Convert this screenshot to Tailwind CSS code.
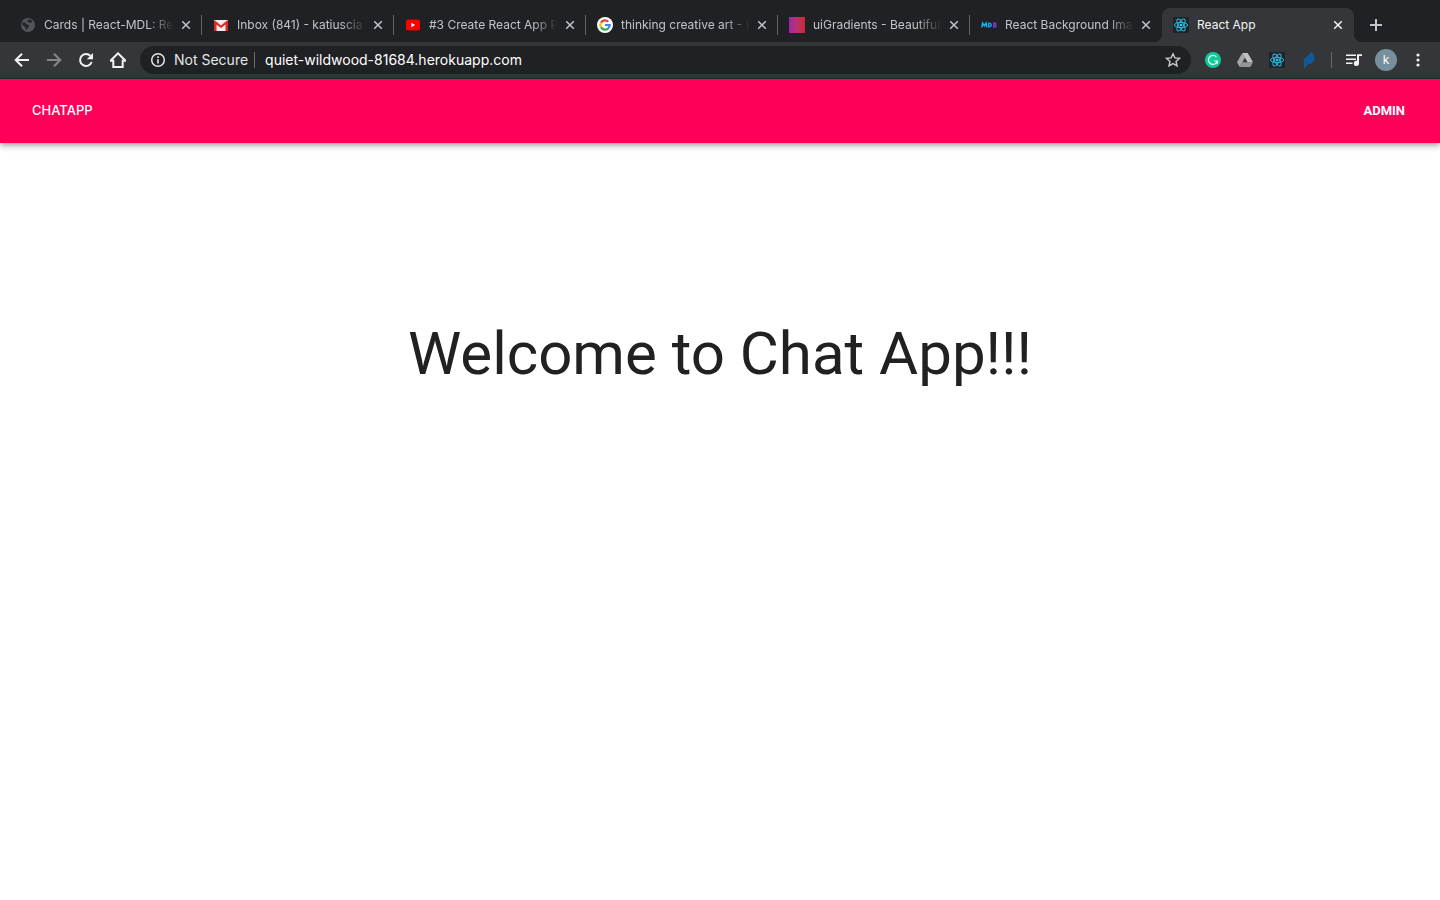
<!DOCTYPE html>
<html lang="en">
<head>
<meta charset="utf-8">
<meta name="viewport" content="width=device-width, initial-scale=1">
<title>React App</title>
<script src="https://cdn.jsdelivr.net/npm/@tailwindcss/browser@4"></script>
</head>
<body class="bg-white font-['Inter',sans-serif]">
<svg class="hidden" aria-hidden="true">
  <symbol id="close" viewBox="0 0 16 16"><path d="M4.200 4.200l7.600 7.600M11.800 4.200l-7.600 7.600" fill="none" stroke="currentColor" stroke-width="1.500"/></symbol>
  <symbol id="react" viewBox="0 0 16 16">
    <rect width="16" height="16" rx="1" fill="#20232a"/>
    <g fill="none" stroke="#2bb9dd" stroke-width="1">
      <ellipse cx="8" cy="8" rx="6.600" ry="2.600"/>
      <ellipse cx="8" cy="8" rx="6.600" ry="2.600" transform="rotate(60 8 8)"/>
      <ellipse cx="8" cy="8" rx="6.600" ry="2.600" transform="rotate(120 8 8)"/>
    </g>
    <circle cx="8" cy="8" r="1.300" fill="#2bd3f7"/>
  </symbol>
</svg>

<!-- Browser chrome -->
<div class="bg-[#202124]">
  <nav aria-label="Tabs" class="flex items-end pt-2 pl-[10px]">
    <div class="relative flex h-[34px] min-w-0 max-w-48 flex-1 items-center pr-2 pl-[10px]">
      <svg class="mr-2 size-4 shrink-0" viewBox="0 0 16 16"><circle cx="8" cy="8" r="7" fill="#54555b"/><path d="M2.500 5.500C4 5 5.500 5.800 6.500 7c.8.9 2 .5 2.500 1.500.5 1.200-.8 1.500-1.200 2.500-.3.900-1 2-1.600 1.600C5.400 12 5.800 10.500 5 9.800 4 9 2.500 8.500 2.300 7.500zM8.500 2.300c1.500 0 3.300.8 4.200 2.200-1 .3-1.200 1.300-2.200 1.400-1 .1-1.200-.9-2.200-1-.8-.1-1.200-.6-.9-1.300z" fill="#25262a"/></svg>
      <a href="#" class="min-w-0 flex-1 overflow-hidden text-xs whitespace-nowrap text-[#c1c4c9] [mask-image:linear-gradient(to_right,black_80%,transparent)]">Cards | React-MDL: Rea</a>
      <button aria-label="Close tab" class="ml-1 size-4 shrink-0 text-[#c1c4c9]"><svg class="size-4"><use href="#close"/></svg></button>
      <span class="absolute top-[7px] right-0 h-5 w-px bg-[#5f6064]"></span>
    </div>
    <div class="relative flex h-[34px] min-w-0 max-w-48 flex-1 items-center pr-2 pl-[11px]">
      <svg class="mr-2 size-4 shrink-0" viewBox="0 0 16 16"><path d="M1 3h14v11H1z" fill="#eee"/><path d="M1 14V3.500h1L8 8.500l6-5h1V14h-2.500V7.500L8 11 3.500 7.500V14z" fill="#e0281f"/></svg>
      <a href="#" class="min-w-0 flex-1 overflow-hidden text-xs whitespace-nowrap text-[#c1c4c9] [mask-image:linear-gradient(to_right,black_80%,transparent)]">Inbox (841) - katiuscia</a>
      <button aria-label="Close tab" class="ml-1 size-4 shrink-0 text-[#c1c4c9]"><svg class="size-4"><use href="#close"/></svg></button>
      <span class="absolute top-[7px] right-0 h-5 w-px bg-[#5f6064]"></span>
    </div>
    <div class="relative flex h-[34px] min-w-0 max-w-48 flex-1 items-center pr-2 pl-[11px]">
      <svg class="mr-2 size-4 shrink-0" viewBox="0 0 16 16"><rect x="1" y="2.500" width="14" height="11" rx="2.500" fill="#f00"/><path d="M6.300 5.800v4.400L10.200 8z" fill="#fff"/></svg>
      <a href="#" class="min-w-0 flex-1 overflow-hidden text-xs whitespace-nowrap text-[#c1c4c9] [mask-image:linear-gradient(to_right,black_80%,transparent)]">#3 Create React App P</a>
      <button aria-label="Close tab" class="ml-1 size-4 shrink-0 text-[#c1c4c9]"><svg class="size-4"><use href="#close"/></svg></button>
      <span class="absolute top-[7px] right-0 h-5 w-px bg-[#5f6064]"></span>
    </div>
    <div class="relative flex h-[34px] min-w-0 max-w-48 flex-1 items-center pr-2 pl-[11px]">
      <svg class="mr-2 size-4 shrink-0" viewBox="0 0 16 16"><circle cx="8" cy="8" r="8" fill="#fff"/><g fill="none" stroke-width="2.200"><path d="M4 5.600A4.700 4.700 0 0 1 11.300 4.700" stroke="#ea4335"/><path d="M4 5.600a4.700 4.700 0 0 0 0 4.800" stroke="#fbbc05"/><path d="M4 10.400a4.700 4.700 0 0 0 7 1.200" stroke="#34a853"/><path d="M8 8h4.700a4.700 4.700 0 0 1-1.700 3.600" stroke="#4285f4"/></g></svg>
      <a href="#" class="min-w-0 flex-1 overflow-hidden text-xs whitespace-nowrap text-[#c1c4c9] [mask-image:linear-gradient(to_right,black_80%,transparent)]">thinking creative art - R</a>
      <button aria-label="Close tab" class="ml-1 size-4 shrink-0 text-[#c1c4c9]"><svg class="size-4"><use href="#close"/></svg></button>
      <span class="absolute top-[7px] right-0 h-5 w-px bg-[#5f6064]"></span>
    </div>
    <div class="relative flex h-[34px] min-w-0 max-w-48 flex-1 items-center pr-2 pl-[11px]">
      <span class="mr-2 size-4 shrink-0 bg-linear-to-r from-[#a024a8] to-[#d42323]"></span>
      <a href="#" class="min-w-0 flex-1 overflow-hidden text-xs whitespace-nowrap text-[#c1c4c9] [mask-image:linear-gradient(to_right,black_80%,transparent)]">uiGradients - Beautiful</a>
      <button aria-label="Close tab" class="ml-1 size-4 shrink-0 text-[#c1c4c9]"><svg class="size-4"><use href="#close"/></svg></button>
      <span class="absolute top-[7px] right-0 h-5 w-px bg-[#5f6064]"></span>
    </div>
    <div class="relative flex h-[34px] min-w-0 max-w-48 flex-1 items-center pr-2 pl-[11px]">
      <svg class="mr-2 size-4 shrink-0" viewBox="0 0 16 16" fill="none" stroke-width="1.500"><path d="M.8 10.300l.8-4.300 1.700 2.800L5 6l.8 4.300" stroke="#14b4ea"/><path d="M7.700 6.200v3.500h.8a1.700 1.700 0 0 0 0-3.500z" stroke="#1c9fe8"/><path d="M12.800 6v4h1.400a1.100 1.100 0 0 0 0-2.100h-1.400 1.200a.9.900 0 0 0 0-1.900z" stroke="#7038c8"/></svg>
      <a href="#" class="min-w-0 flex-1 overflow-hidden text-xs whitespace-nowrap text-[#c1c4c9] [mask-image:linear-gradient(to_right,black_80%,transparent)]">React Background Ima</a>
      <button aria-label="Close tab" class="ml-1 size-4 shrink-0 text-[#c1c4c9]"><svg class="size-4"><use href="#close"/></svg></button>
    </div>
    <div class="relative flex h-[34px] min-w-0 max-w-48 flex-1 items-center rounded-t-lg bg-[#35363a] pr-2 pl-[11px]">
      <span class="absolute bottom-0 -left-2 size-2 bg-[radial-gradient(circle_at_0_0,transparent_8px,#35363a_8px)]"></span>
      <span class="absolute -right-2 bottom-0 size-2 bg-[radial-gradient(circle_at_100%_0,transparent_8px,#35363a_8px)]"></span>
      <svg class="mr-2 size-4 shrink-0"><use href="#react"/></svg>
      <a href="#" aria-current="page" class="min-w-0 flex-1 overflow-hidden text-xs whitespace-nowrap text-[#f4f5f6]">React App</a>
      <button aria-label="Close tab" class="ml-1 size-4 shrink-0 text-[#f1f3f4]"><svg class="size-4"><use href="#close"/></svg></button>
    </div>
    <button aria-label="New tab" class="mb-[9px] ml-[14px] size-4 shrink-0 text-[#c1c4c9]"><svg class="size-4" viewBox="0 0 16 16"><path d="M8 2v12M2 8h12" fill="none" stroke="currentColor" stroke-width="2"/></svg></button>
  </nav>

  <div class="flex h-[37px] items-center border-b border-[#28292c] bg-[#35363a] px-[14px]">
    <div class="flex shrink-0 gap-4 text-[#f1f3f4]">
      <button aria-label="Back"><svg class="size-4" viewBox="0 0 16 16" fill="none" stroke="currentColor" stroke-width="2"><path d="M15 8H2.500M8 1.700L1.700 8 8 14.300"/></svg></button>
      <button aria-label="Forward" class="text-[#85868a]"><svg class="size-4" viewBox="0 0 16 16" fill="none" stroke="currentColor" stroke-width="2"><path d="M1 8h12.500M8 1.700L14.300 8 8 14.300"/></svg></button>
      <button aria-label="Reload"><svg class="size-4" viewBox="0 0 16 16"><path d="M13.700 10a6 6 0 1 1-1.300-6.200" fill="none" stroke="currentColor" stroke-width="2"/><path d="M15 1v6.200H8.800z" fill="currentColor"/></svg></button>
      <button aria-label="Home"><svg class="size-4" viewBox="0 0 16 16" fill="none" stroke="currentColor" stroke-width="2"><path d="M0.500 8.700h2.800V15h9.400V8.700h2.800L8 1.300z"/></svg></button>
    </div>
    <div class="ml-[14px] flex h-7 min-w-0 flex-1 items-center rounded-full bg-[#202124] px-[10px] text-sm">
      <button class="flex shrink-0 items-center gap-2 text-[#e4e6e8]"><svg class="size-4" viewBox="0 0 16 16"><circle cx="8" cy="8" r="6.300" fill="none" stroke="currentColor" stroke-width="1.500"/><path d="M7.200 7.200h1.600v4.300H7.200zM7.200 4.300h1.600v1.600H7.200z" fill="currentColor"/></svg>Not Secure</button>
      <span class="mr-[10px] ml-[6px] h-4 w-px bg-[#6b6c70]"></span>
      <input aria-label="Address" type="text" value="quiet-wildwood-81684.herokuapp.com" class="min-w-0 flex-1 bg-transparent text-white outline-none">
      <button aria-label="Bookmark" class="text-[#c8cace]"><svg class="size-4" viewBox="0 0 16 16"><path d="M8 1.800l1.900 4.100 4.500.5-3.400 3 1 4.500L8 11.600l-4 2.300 1-4.500-3.400-3 4.500-.5z" fill="none" stroke="currentColor" stroke-width="1.400"/></svg></button>
    </div>
    <div class="ml-[14px] flex shrink-0 items-center gap-4">
      <button aria-label="Grammarly"><svg class="size-4" viewBox="0 0 16 16"><circle cx="8" cy="8" r="8" fill="#0fc998"/><path d="M11.400 5A4.500 4.500 0 1 0 12.300 9H9.200M12.300 8.500v3.300" fill="none" stroke="#e6fff8" stroke-width="1.200"/></svg></button>
      <button aria-label="Drive"><svg class="size-4" viewBox="0 0 16 16"><path d="M5.300 1L0 10.200 2.700 15 8 5.700z" fill="#a5a5a5"/><path d="M5.300 1h5.400L16 10.200h-5.400z" fill="#c2c2c2"/><path d="M5.400 10.200H16L13.300 15H2.700z" fill="#959595"/></svg></button>
      <button aria-label="React developer tools"><svg class="size-4"><use href="#react"/></svg></button>
      <button aria-label="Feather"><svg class="size-4" viewBox="0 0 16 16"><path d="M11 0c.2 1.500 1.800 2.600 2.300 4.500.4 2-.3 4.500-1.800 6-1.300 1.300-3.700 1.500-5.400 2.500L4.200 16l-1.600-.5L3.500 13C1.800 10.500 2.500 7.500 4.500 5.500 6 4.200 8 3.500 8.800 1.800z" fill="#0d5a9e"/><path d="M4.500 12c1.500-3 4-4.500 6-8.500" fill="none" stroke="#1c4a7c" stroke-width=".8"/></svg></button>
    </div>
    <span class="ml-[14px] h-4 w-px shrink-0 bg-[#66676b]"></span>
    <button aria-label="Media controls" class="ml-[14px] shrink-0 text-[#f1f3f4]"><svg class="size-4" viewBox="0 0 16 16"><path d="M0 3.200h10M0 7.200h10M0 11.200h6.500" fill="none" stroke="currentColor" stroke-width="1.500"/><path d="M11 2.300h5V4h-3v7.300a2.600 2.600 0 1 1-2-2.500z" fill="currentColor"/></svg></button>
    <button aria-label="Profile" class="ml-[13px] size-[22px] shrink-0 rounded-full bg-[#78909c] text-center text-xs leading-[22px] text-white">k</button>
    <button aria-label="Menu" class="ml-[13px] shrink-0 text-[#f1f3f4]"><svg class="size-4" viewBox="0 0 16 16" fill="currentColor"><circle cx="8" cy="3" r="1.600"/><circle cx="8" cy="8" r="1.600"/><circle cx="8" cy="13" r="1.600"/></svg></button>
  </div>
</div>

<!-- Page -->
<header class="relative flex h-16 items-center justify-between bg-[#ff0058] pr-[35px] pl-8 text-[13px] text-white shadow-[0_2px_4px_-1px_rgba(0,0,0,0.2),0_4px_5px_0_rgba(0,0,0,0.14),0_1px_10px_0_rgba(0,0,0,0.12)]">
  <a href="#" class="font-medium">CHATAPP</a>
  <a href="#" class="font-['Roboto',sans-serif] font-bold">ADMIN</a>
</header>
<main class="px-4 pt-[174px] text-center">
  <h1 class="font-['Roboto',sans-serif] text-[60px] leading-[74px] text-[#212121]">Welcome to Chat App!!!</h1>
</main>
</body>
</html>
